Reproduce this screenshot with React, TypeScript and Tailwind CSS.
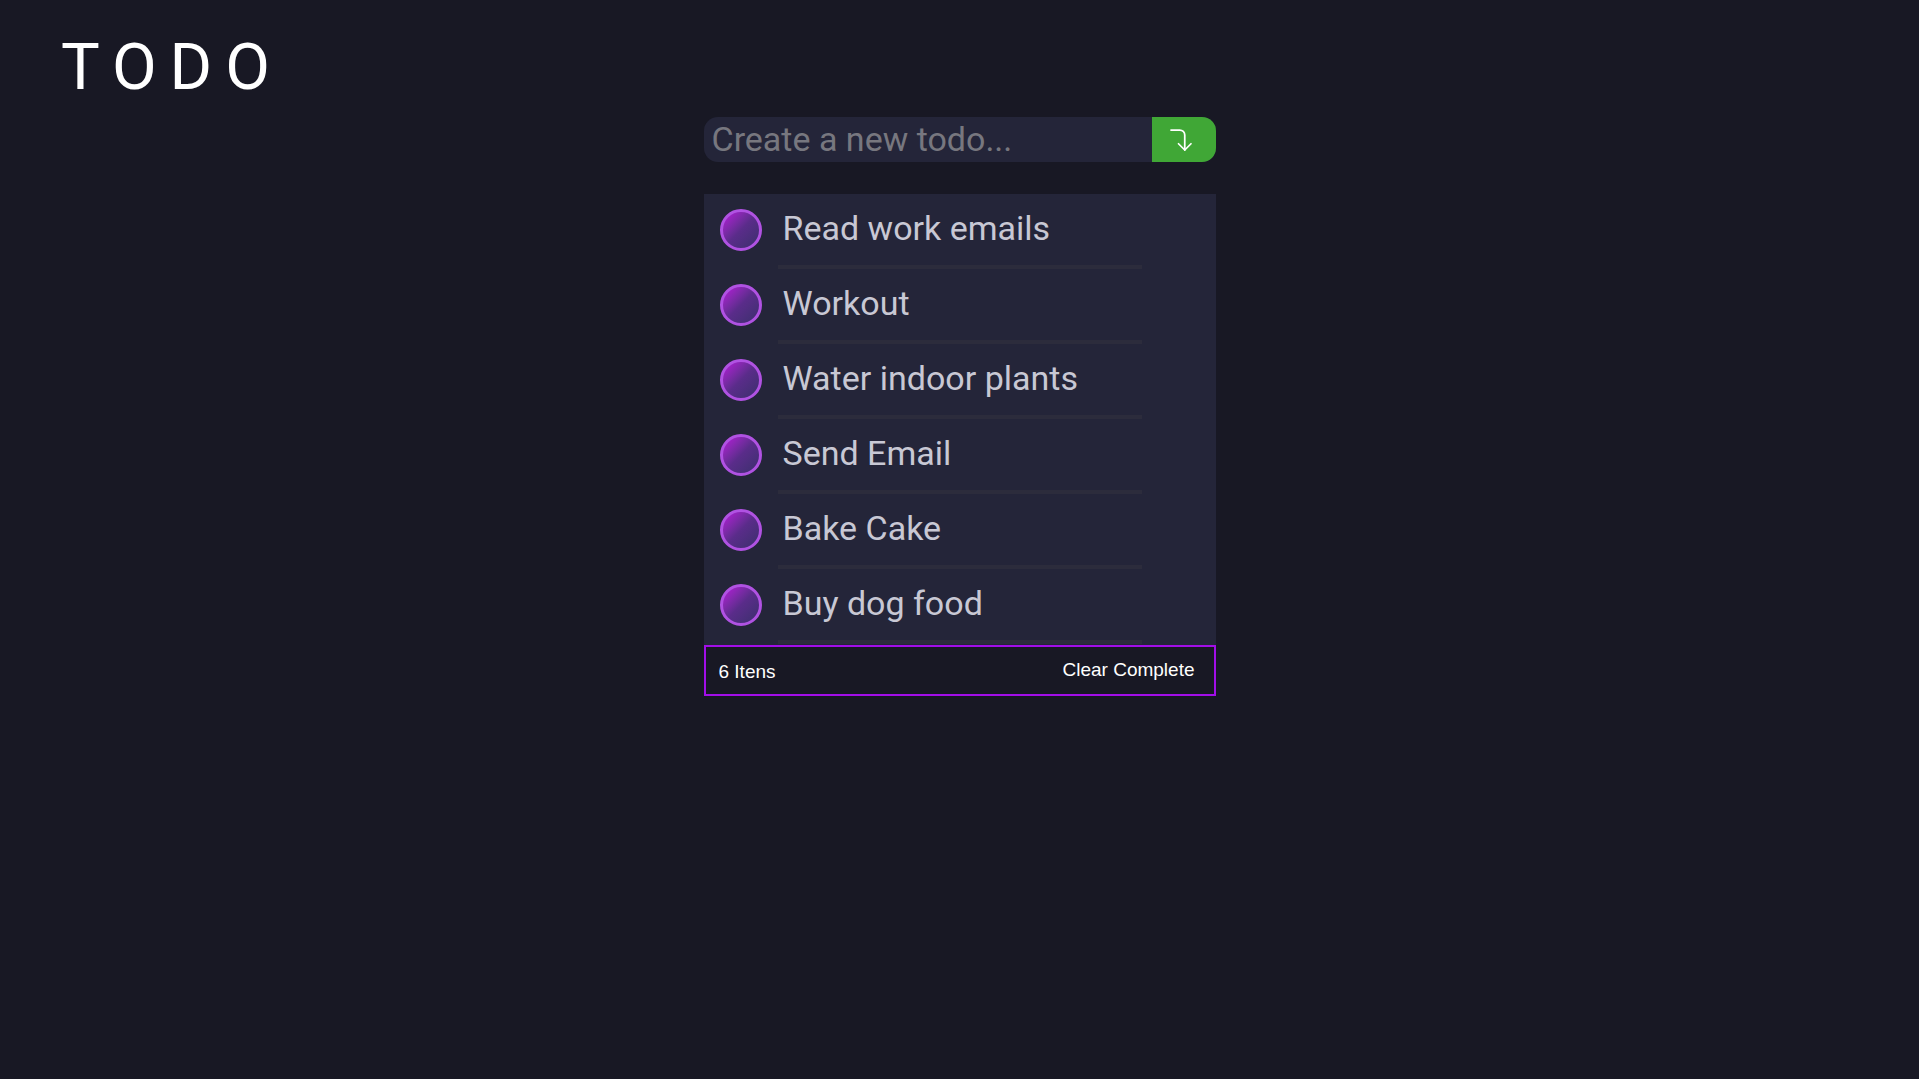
import { CornerRightDown } from "lucide-react";

const todos = [
  "Read work emails",
  "Workout",
  "Water indoor plants",
  "Send Email",
  "Bake Cake",
  "Buy dog food",
];

const App = () => {
  return (
    <div className="min-h-screen w-full bg-[#181824] font-['Roboto',sans-serif]">
      {/* Header */}
      <header className="px-[61px] pt-[35px]">
        <h1 className="text-[65px] leading-none font-normal tracking-[0.2em] text-white">TODO</h1>
      </header>

      <main className="mx-auto mt-[17px] w-[512px]">
        {/* New todo */}
        <form className="flex h-[45px] overflow-hidden rounded-[14px] bg-[#242539]" onSubmit={(e) => e.preventDefault()}>
          <input
            type="text"
            placeholder="Create a new todo..."
            className="min-w-0 flex-1 bg-transparent pl-2 text-[34px] text-[#c8c8d4] placeholder:text-[#77777f] outline-none"
          />
          <button type="submit" className="flex w-[64px] items-center justify-center pr-[6px] bg-[#40a736] text-white">
            <CornerRightDown size={30} strokeWidth={1.4} />
          </button>
        </form>

        {/* List */}
        <ul className="mt-[32px] bg-[#242539] pb-[1px]">
          {todos.map((todo) => (
            <li key={todo}>
              <div className="flex h-[71px] items-center pl-[16px]">
                <span className="h-[42px] w-[42px] shrink-0 rounded-full border-[3px] border-[#b052e2] bg-gradient-to-br from-[#b810dc] via-[#5a2c8a] to-[#3a2f6c]" />
                <span className="ml-[21px] pb-[3px] text-[34px] leading-none text-[#c8c8d4]">{todo}</span>
              </div>
              <div className="ml-[74px] h-[4px] w-[364px] bg-[#2c2c3c]" />
            </li>
          ))}
        </ul>

        {/* Footer */}
        <div className="flex h-[51px] items-center justify-between border-2 border-[#a20ee8] bg-[#181824] pl-[13px] pr-[19px] font-['Liberation_Sans',Arial,sans-serif] text-[19px] text-white">
          <span className="pt-[3px]">6 Itens</span>
          <button type="button" className="text-white">Clear Complete</button>
        </div>
      </main>
    </div>
  );
};

export default App;
